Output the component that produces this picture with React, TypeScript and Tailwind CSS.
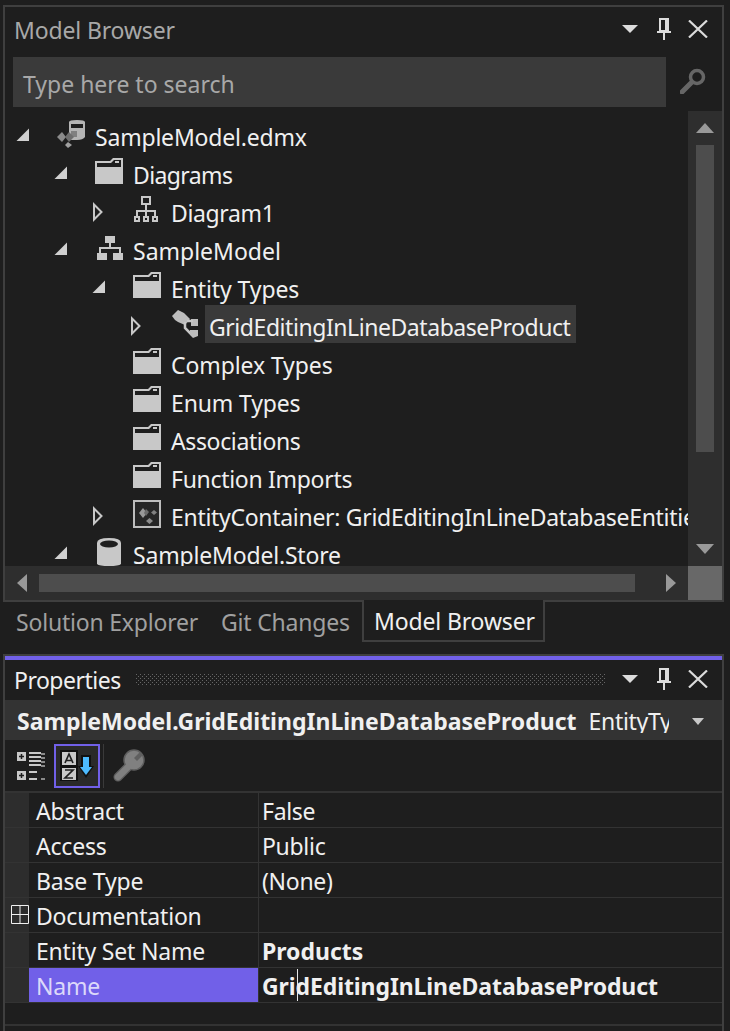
import type { ReactNode } from "react";

const Arrow = ({ open }: { open: boolean }) =>
  open ? (
    <svg width="14" height="14" viewBox="0 0 14 14" className="-mt-[2px] block">
      <path d="M0.5 13L13 0.5V13z" fill="#d0d0d0" />
    </svg>
  ) : (
    <svg width="12" height="20" viewBox="0 0 12 20" className="block">
      <path d="M2 2.5L9.5 10L2 17.5z" fill="none" stroke="#c8c8c8" strokeWidth="2" />
    </svg>
  );

const Folder = () => (
  <svg width="28" height="26" viewBox="0 0 28 26" className="block">
    <path d="M0 3h15l3-3h10v26H0z" fill="#c8c8c8" />
    <path d="M2 5h14l3-3h7v7H2z" fill="#1e1e1e" />
    <path d="M20 3h4v2h-4z" fill="#c8c8c8" />
  </svg>
);

const OutlineTree = () => (
  <svg width="28" height="28" viewBox="0 0 28 28" className="block">
    <g fill="none" stroke="#c8c8c8" strokeWidth="2">
      <rect x="9" y="1" width="8" height="7" />
      <path d="M13 8v12M4 20v-5h18v5" />
      <rect x="2" y="21" width="4" height="4" />
      <rect x="11" y="21" width="4" height="4" />
      <rect x="20" y="21" width="4" height="4" />
    </g>
  </svg>
);

const FilledTree = () => (
  <svg width="28" height="28" viewBox="0 0 28 28" className="block">
    <path d="M10 2h10v7h-4v4h10v6h-2v-4H6v4H4v-6h10V9h-4z" fill="#c8c8c8" />
    <rect x="2" y="19" width="10" height="7" fill="#c8c8c8" />
    <rect x="18" y="19" width="10" height="7" fill="#c8c8c8" />
  </svg>
);

const EdmxIcon = () => (
  <svg width="28" height="28" viewBox="0 0 28 28" className="block">
    <path d="M12 2q0-2 8-2t8 2v15q-2 3-8 3h-8z" fill="#b4b4b4" />
    <path d="M14 4h12v4H14z" fill="#1e1e1e" />
    <path d="M14 11h6v6h-6z" fill="#808080" />
    <path d="M5 12l4 5-4 5-5-5z" fill="#8a8a8a" />
    <path d="M12 12l5 5-5 5-4-5z" fill="#6e6e6e" />
    <path d="M11 22l4 3-4 3-3-3z" fill="#a0a0a0" />
  </svg>
);

const EntityIcon = () => (
  <svg width="28" height="28" viewBox="0 0 28 28" className="block">
    <path d="M1 6l6-6 6 3 6 6-5 6-7-3-3-2z" fill="#bdbdbd" />
    <rect x="20" y="9" width="7" height="7" fill="#bdbdbd" />
    <path d="M14 12v6l6 6M16 11h6" fill="none" stroke="#c8c8c8" strokeWidth="2.500" />
    <path d="M19 20h8v6l-5 2-3-3z" fill="#bdbdbd" />
  </svg>
);

const ContainerIcon = () => (
  <svg width="28" height="28" viewBox="0 0 28 28" className="block">
    <rect x="1" y="1" width="26" height="26" fill="#262626" stroke="#bdbdbd" strokeWidth="2" />
    <path d="M10 8l4 5-4 5-4-5z" fill="#999" />
    <path d="M13 9l3 3-3 4-2-3z" fill="#6c6c6c" />
    <path d="M21 10l3 2.500-3 2.500-3-2.500z" fill="#808080" />
    <path d="M16.500 18l3.500 3-3.500 3-3.500-3z" fill="#8c8c8c" />
  </svg>
);

const CylinderIcon = () => (
  <svg width="24" height="28" viewBox="0 0 24 28" className="ml-[2px] block">
    <path d="M0 5q0-5 12-5t12 5v21q-2 2-12 2T0 26z" fill="#c8c8c8" />
    <ellipse cx="12" cy="6" rx="9" ry="3.500" fill="#1e1e1e" />
  </svg>
);

const Pin = () => (
  <svg width="14" height="22" viewBox="0 0 14 22" className="block">
    <path d="M3 1h8v12H3z" fill="none" stroke="#dcdcdc" strokeWidth="2" />
    <path d="M8 2h3v11H8z" fill="#dcdcdc" />
    <path d="M0 13h14v2H0zM6 15h2v7H6z" fill="#dcdcdc" />
  </svg>
);

const Close = () => (
  <svg width="20" height="18" viewBox="0 0 20 18" className="block">
    <path d="M1 0.5L19 17.500M19 0.5L1 17.500" stroke="#dcdcdc" strokeWidth="2.200" />
  </svg>
);

const Drop = () => (
  <svg width="16" height="8" viewBox="0 0 16 8" className="block">
    <path d="M0 0h16L8 8z" fill="#dcdcdc" />
  </svg>
);

const WindowButtons = () => (
  <div className="flex items-center">
    <div className="w-[35px]"><Drop /></div>
    <div className="w-[31px]"><Pin /></div>
    <Close />
  </div>
);

const Row = ({
  pad,
  track = "tracking-[-0.3px]",
  arrow,
  icon,
  highlight,
  children,
}: {
  pad: string;
  track?: string;
  arrow?: "open" | "closed";
  icon: ReactNode;
  highlight?: boolean;
  children: ReactNode;
}) => (
  <div className={`flex h-[38px] shrink-0 items-center whitespace-nowrap ${pad} ${track}`}>
    <div className="mt-[4px] flex w-[41px] shrink-0 items-center">
      {arrow && <Arrow open={arrow === "open"} />}
    </div>
    <div className="flex h-[28px] w-[38px] shrink-0 items-start">{icon}</div>
    {highlight ? (
      <div className="-ml-[4px] flex h-full items-center bg-[#3a3a3a] pt-[6px] pr-[6px] pl-[4px]">
        {children}
      </div>
    ) : (
      <span className="mt-[6px]">{children}</span>
    )}
  </div>
);

const PropRow = ({
  name,
  value,
  bold,
  expander,
  selected,
  boldTrack = "tracking-[0px]",
}: {
  name: string;
  value?: string;
  bold?: boolean;
  expander?: boolean;
  selected?: boolean;
  boldTrack?: string;
}) => (
  <div className="flex h-[35px] shrink-0 border-b border-[#333333]">
    <div className="relative w-[24px] shrink-0 bg-[#2d2d2d]">
      {expander && (
        <svg width="18" height="19" viewBox="0 0 18 19" className="absolute top-[7px] left-[6px] block">
          <path d="M0.5 0.5h17v18H0.5zM9 1v17M1 9.500h16" fill="none" stroke="#f0f0f0" strokeWidth="1" />
        </svg>
      )}
    </div>
    <div
      className={`flex w-[229px] shrink-0 items-center pt-[3px] pl-[7px] tracking-[-0.2px] ${
        selected ? "bg-[#7160e8] text-[#dcd8fa]" : "text-[#f0f0f0]"
      }`}
    >
      {name}
    </div>
    <div className="relative flex flex-1 items-center border-l border-[#333333] pt-[3px] pl-[3px] text-[#f0f0f0]">
      <span className={bold ? `font-bold ${boldTrack}` : "tracking-[-0.3px]"}>{value}</span>
      {selected && <div className="absolute top-[1px] left-[38px] h-[32px] w-px bg-[#e8e8e8]" />}
    </div>
  </div>
);

export default function App() {
  return (
    <div className="flex h-[1031px] w-[730px] flex-col overflow-hidden bg-[#1e1e1e] font-['Noto_Sans',sans-serif] text-[23px] leading-none">
      <div className="mt-[5px] ml-[3px] flex h-[597px] w-[721px] shrink-0 flex-col border-2 border-[#3f3f3f]">
        <div className="flex h-[50px] shrink-0 items-center justify-between pr-[14px] pl-[9px]">
          <span className="-mt-[4px] tracking-[-0.15px] text-[#a8a8a8]">Model Browser</span>
          <div className="-mt-[6px]"><WindowButtons /></div>
        </div>
        <div className="flex h-[50px] shrink-0 items-center">
          <div className="ml-[8px] flex h-full w-[653px] items-center bg-[#3a3a3a] pt-[4px] pl-[10px] text-[#a8a8a8]">
            Type here to search
          </div>
          <svg width="26" height="26" viewBox="0 0 26 26" className="-mt-[2px] ml-[14px] block">
            <circle cx="17" cy="9" r="6.500" fill="none" stroke="#666" strokeWidth="3.500" />
            <path d="M11 15L2 24" stroke="#666" strokeWidth="5" strokeLinecap="round" />
          </svg>
        </div>
        <div className="mt-[4px] flex min-h-0 flex-1">
          <div className="flex min-w-0 flex-1 flex-col overflow-hidden pt-[4px] text-[#f0f0f0]">
            <Row pad="pl-[11px]" track="tracking-[-0.2px]" arrow="open" icon={<EdmxIcon />}>SampleModel.edmx</Row>
            <Row pad="pl-[49px]" track="tracking-[-0.6px]" arrow="open" icon={<Folder />}>Diagrams</Row>
            <Row pad="pl-[87px]" track="tracking-[-0.37px]" arrow="closed" icon={<OutlineTree />}>Diagram1</Row>
            <Row pad="pl-[49px]" track="tracking-[0px]" arrow="open" icon={<FilledTree />}>SampleModel</Row>
            <Row pad="pl-[87px]" track="tracking-[-0.1px]" arrow="open" icon={<Folder />}>Entity Types</Row>
            <Row pad="pl-[125px]" track="tracking-[-0.44px]" arrow="closed" icon={<EntityIcon />} highlight>
              GridEditingInLineDatabaseProduct
            </Row>
            <Row pad="pl-[87px]" track="tracking-[-0.1px]" icon={<Folder />}>Complex Types</Row>
            <Row pad="pl-[87px]" track="tracking-[-0.15px]" icon={<Folder />}>Enum Types</Row>
            <Row pad="pl-[87px]" track="tracking-[-0.37px]" icon={<Folder />}>Associations</Row>
            <Row pad="pl-[87px]" track="tracking-[-0.3px]" icon={<Folder />}>Function Imports</Row>
            <Row pad="pl-[87px]" arrow="closed" icon={<ContainerIcon />}>EntityContainer: GridEditingInLineDatabaseEntities</Row>
            <Row pad="pl-[49px]" track="tracking-[-0.18px]" arrow="open" icon={<CylinderIcon />}>SampleModel.Store</Row>
          </div>
          <div className="flex w-[34px] shrink-0 flex-col items-center bg-[#2e2e2e]">
            <svg width="18" height="10" viewBox="0 0 18 10" className="mt-[12px] block">
              <path d="M9 0l9 10H0z" fill="#999" />
            </svg>
            <div className="mt-[12px] h-[307px] w-[18px] bg-[#4d4d4d]" />
            <svg width="18" height="10" viewBox="0 0 18 10" className="mt-auto mb-[12px] block">
              <path d="M0 0h18L9 10z" fill="#999" />
            </svg>
          </div>
        </div>
        <div className="flex h-[34px] shrink-0 items-center bg-[#2e2e2e]">
          <svg width="10" height="18" viewBox="0 0 10 18" className="ml-[12px] block">
            <path d="M10 0v18L0 9z" fill="#999" />
          </svg>
          <div className="ml-[12px] h-[18px] w-[596px] bg-[#4d4d4d]" />
          <svg width="10" height="18" viewBox="0 0 10 18" className="ml-[31px] block">
            <path d="M0 0v18l10-9z" fill="#999" />
          </svg>
          <div className="ml-auto h-full w-[34px] bg-[#686868]" />
        </div>
      </div>

      <div className="-mt-[2px] flex h-[44px] shrink-0 items-start pl-[16px] text-[#a0a0a0]">
        <span className="mt-[11px] w-[205px] tracking-[-0.2px]">Solution Explorer</span>
        <span className="mt-[11px] w-[141px] tracking-[-0.2px]">Git Changes</span>
        <div className="flex h-[42px] w-[183px] items-center border-r-2 border-b-2 border-l-2 border-[#3f3f3f] bg-[#1e1e1e] pt-[2px] pl-[10px] tracking-[-0.15px] text-[#f0f0f0]">
          Model Browser
        </div>
      </div>

      <div className="mt-[10px] ml-[3px] flex w-[721px] flex-1 flex-col border-x-2 border-t-2 border-[#3f3f3f]">
        <div className="h-[4px] shrink-0 bg-[#7160e8]" />
        <div className="flex h-[40px] shrink-0 items-center pr-[14px] pl-[9px]">
          <span className="w-[106px] tracking-[-0.5px] text-[#f0f0f0]">Properties</span>
          <svg width="470" height="12" className="ml-[16px] block">
            <defs>
              <pattern id="grip" width="4" height="4" patternUnits="userSpaceOnUse">
                <rect x="0" y="0" width="1" height="1" fill="#666" />
                <rect x="2" y="2" width="1" height="1" fill="#666" />
              </pattern>
            </defs>
            <rect width="470" height="12" fill="url(#grip)" />
          </svg>
          <div className="-mt-[2px] ml-auto"><WindowButtons /></div>
        </div>
        <div className="flex h-[40px] shrink-0 items-center bg-[#333333] pt-[3px] pl-[12px] whitespace-nowrap text-[#f0f0f0]">
          <span className="font-bold">SampleModel.GridEditingInLineDatabaseProduct</span>
          <span className="ml-[12px] w-[80px] overflow-hidden tracking-[-0.3px]">EntityType</span>
          <svg width="12" height="7" viewBox="0 0 12 7" className="ml-[23px] block">
            <path d="M0 0h12L6 7z" fill="#c8c8c8" />
          </svg>
        </div>
        <div className="flex h-[53px] shrink-0 items-center border-b-2 border-[#333333]">
          <svg width="28" height="30" viewBox="0 0 28 30" className="ml-[12px] block">
            <path d="M0 1h9v9H0zM0 20h9v9H0z" fill="#c8c8c8" />
            <path d="M2 5.500h5M4.500 3v5M2 24.500h5M4.500 22v5" stroke="#1e1e1e" strokeWidth="1.500" />
            <path d="M12 2h12M12 6h12M12 10h12M12 14h12M12 21h8M12 28h8" stroke="#c8c8c8" strokeWidth="2" />
            <path d="M24 3h4M24 7h4M24 11h4M24 15h4M24 28h4" stroke="#8a8a8a" strokeWidth="2" />
          </svg>
          <div className="ml-[9px] flex h-[44px] w-[46px] items-center justify-center border-2 border-[#7160e8] bg-[#2a2a2a]">
            <svg width="34" height="32" viewBox="0 0 34 32" className="block">
              <rect x="0" y="0" width="18" height="31" fill="#111" />
              <rect x="2" y="2" width="14" height="13" fill="#c8c8c8" />
              <rect x="2" y="18" width="14" height="12" fill="#c8c8c8" />
              <path d="M5 13l4-9 4 9M6.500 10.500h5" fill="none" stroke="#1e1e1e" strokeWidth="1.700" />
              <path d="M5 20h8l-8 8h8" fill="none" stroke="#1e1e1e" strokeWidth="1.700" />
              <path d="M21 5h10v11h3L26 28 18 16h3z" fill="#111" />
              <path d="M23 7h6v10h3l-6 8-6-8h3z" fill="#4dbbff" />
            </svg>
          </div>
          <div className="ml-[3px] h-[44px] w-px bg-[#3a3a3a]" />
          <svg width="32" height="33" viewBox="0 0 32 33" className="ml-[9px] block">
            <path d="M5 28L15 18" stroke="#5f5f5f" strokeWidth="9" strokeLinecap="round" />
            <circle cx="21" cy="11" r="10" fill="#808080" stroke="#5f5f5f" strokeWidth="1.500" />
            <path d="M5 28L15 18" stroke="#808080" strokeWidth="6.500" strokeLinecap="round" />
            <path d="M21 9l6-6 3 3-6 6z" fill="#5f5f5f" />
          </svg>
        </div>
        <div className="flex min-h-0 flex-1 flex-col whitespace-nowrap">
          <PropRow name="Abstract" value="False" />
          <PropRow name="Access" value="Public" />
          <PropRow name="Base Type" value="(None)" />
          <PropRow name="Documentation" expander />
          <PropRow name="Entity Set Name" value="Products" bold />
          <PropRow name="Name" value="GridEditingInLineDatabaseProduct" bold boldTrack="tracking-[-0.1px]" selected />
          <div className="h-[23px] shrink-0 border-b-2 border-[#333333]" />
        </div>
      </div>
    </div>
  );
}
